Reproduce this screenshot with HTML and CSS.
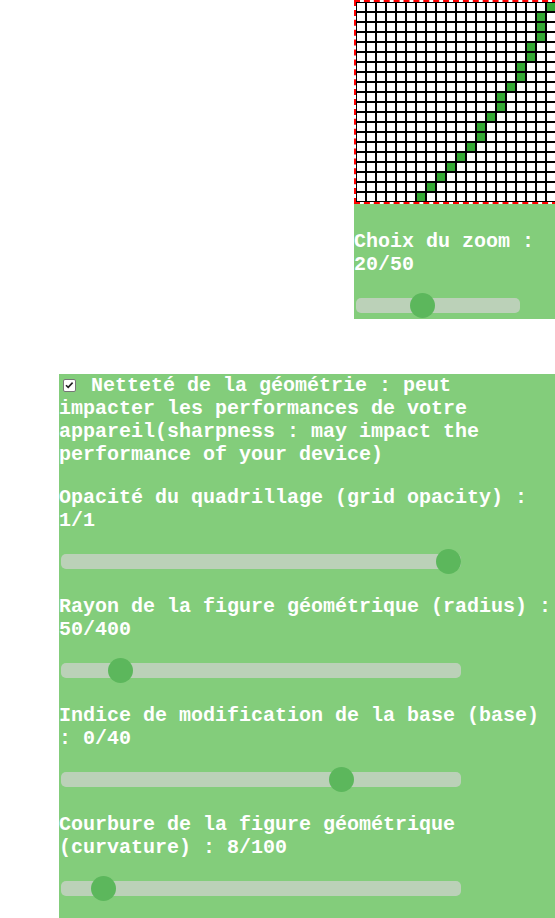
FILE: index.html
```html
<!DOCTYPE html>
<html lang="fr">
<head>
<meta charset="utf-8">
<title>Quadrillage</title>
<link rel="stylesheet" href="styles.css">
</head>
<body>
<main class="page">
  <section class="viewer">
    <svg class="board" width="200" height="200" viewBox="0 0 200 200" aria-label="Aperçu zoomé">
      <rect width="200" height="200" fill="#fff"/>
      <g fill="#33aa33">
        <rect x="190" y="0" width="10" height="10"/>
        <rect x="180" y="10" width="10" height="10"/>
        <rect x="180" y="20" width="10" height="10"/>
        <rect x="180" y="30" width="10" height="10"/>
        <rect x="170" y="40" width="10" height="10"/>
        <rect x="170" y="50" width="10" height="10"/>
        <rect x="160" y="60" width="10" height="10"/>
        <rect x="160" y="70" width="10" height="10"/>
        <rect x="150" y="80" width="10" height="10"/>
        <rect x="140" y="90" width="10" height="10"/>
        <rect x="140" y="100" width="10" height="10"/>
        <rect x="130" y="110" width="10" height="10"/>
        <rect x="120" y="120" width="10" height="10"/>
        <rect x="120" y="130" width="10" height="10"/>
        <rect x="110" y="140" width="10" height="10"/>
        <rect x="100" y="150" width="10" height="10"/>
        <rect x="90" y="160" width="10" height="10"/>
        <rect x="80" y="170" width="10" height="10"/>
        <rect x="70" y="180" width="10" height="10"/>
        <rect x="60" y="190" width="10" height="10"/>
      </g>
      <path stroke="#000" stroke-width="2" fill="none" d="M0 0V200M10 0V200M20 0V200M30 0V200M40 0V200M50 0V200M60 0V200M70 0V200M80 0V200M90 0V200M100 0V200M110 0V200M120 0V200M130 0V200M140 0V200M150 0V200M160 0V200M170 0V200M180 0V200M190 0V200M200 0V200M0 0H200M0 10H200M0 20H200M0 30H200M0 40H200M0 50H200M0 60H200M0 70H200M0 80H200M0 90H200M0 100H200M0 110H200M0 120H200M0 130H200M0 140H200M0 150H200M0 160H200M0 170H200M0 180H200M0 190H200M0 200H200"/>
    </svg>
    <div class="zoom-panel">
      <label class="label" for="zoom">Choix du zoom : 20/50</label>
      <input id="zoom" class="slider slider-small" type="range" min="1" max="50" value="20">
    </div>
  </section>

  <section class="settings">
    <p class="check-row"><span class="checkbox" role="checkbox" aria-checked="true"><svg width="11" height="11" viewBox="0 0 11 11"><path d="M2 5.2L4.2 7.4L8.6 2.6" fill="none" stroke="#222" stroke-width="1.6"/></svg></span> Netteté de la géométrie : peut impacter les performances de votre appareil(sharpness : may impact the performance of your device)</p>

    <div class="field">
      <label class="label" for="opacity">Opacité du quadrillage (grid opacity) : 1/1</label>
      <input id="opacity" class="slider" type="range" min="0" max="1" step="0.01" value="1">
    </div>
    <div class="field">
      <label class="label" for="radius">Rayon de la figure géométrique (radius) : 50/400</label>
      <input id="radius" class="slider" type="range" min="0" max="400" value="50">
    </div>
    <div class="field">
      <label class="label" for="base">Indice de modification de la base (base) : 0/40</label>
      <input id="base" class="slider" type="range" min="-100" max="40" value="0">
    </div>
    <div class="field">
      <label class="label" for="curv">Courbure de la figure géométrique (curvature) : 8/100</label>
      <input id="curv" class="slider" type="range" min="0" max="100" value="8">
    </div>
  </section>
</main>
</body>
</html>
```
FILE: styles.css
```css
html, body {
  margin: 0;
  padding: 0;
  overflow: hidden;
  background: #fff;
}

.page {
  display: flex;
  flex-direction: column;
  align-items: flex-end;
  width: 555px;
  font-family: "Courier New", Courier, "Nimbus Mono PS", "Nimbus Mono L", FreeMono, "Liberation Mono", monospace;
  font-weight: bold;
  font-size: 20px;
  color: #fff;
}

.viewer {
  width: 201px;
  overflow: hidden;
  display: flex;
  flex-direction: column;
}

.board {
  display: block;
  flex: none;
  width: 200px;
  height: 200px;
  border: 2px dashed #ff0000;
  background: #fff;
}

.zoom-panel {
  background: #83cd7b;
  padding: 26px 0 6px;
}

.label {
  display: block;
  margin: 0;
}

.slider {
  -webkit-appearance: none;
  appearance: none;
  display: block;
  width: 400px;
  height: 15px;
  margin: 22px 0 0 2px;
  padding: 0;
  border-radius: 5px;
  background: #d3d3d3;
  opacity: 0.7;
  outline: none;
}

.slider::-webkit-slider-thumb {
  -webkit-appearance: none;
  appearance: none;
  width: 25px;
  height: 25px;
  border: none;
  border-radius: 50%;
  background: #4caf50;
}

.slider-small {
  width: 164px;
}

.settings {
  width: 496px;
  margin-top: 55px;
  background: #83cd7b;
  padding-bottom: 30px;
}

.check-row {
  margin: 0;
}

.checkbox {
  display: inline-block;
  box-sizing: border-box;
  width: 13px;
  height: 13px;
  margin: 0 3px 0 4px;
  vertical-align: -1px;
  border: 1px solid #767676;
  border-radius: 2px;
  background: #fff;
}

.checkbox svg {
  display: block;
}

.field {
  margin-top: 20px;
}

.field + .field {
  margin-top: 26px;
}
```
